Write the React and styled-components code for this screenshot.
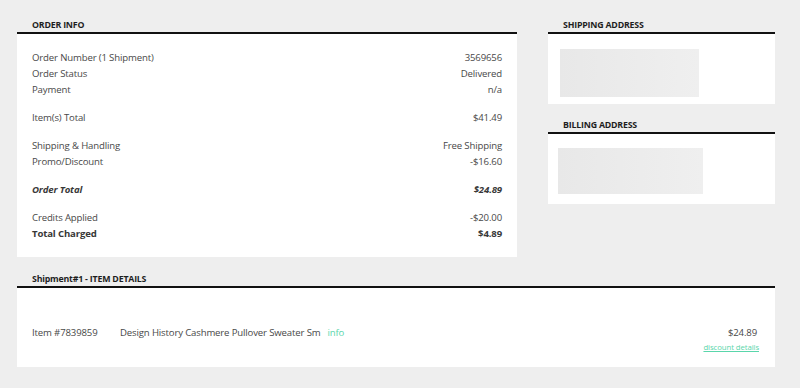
import React from "react";
import styled, { createGlobalStyle } from "styled-components";

const GlobalStyle = createGlobalStyle`
  html, body {
    margin: 0;
    padding: 0;
    background: #eeeeee;
    font-family: "Open Sans", "Liberation Sans", sans-serif;
    color: #484848;
  }
`;

const Page = styled.div`
  width: 800px;
  height: 388px;
  box-sizing: border-box;
  padding: 18px 25px 0 17px;
  display: flex;
  flex-direction: column;
  gap: 15px;
`;

const TopRow = styled.div`
  display: grid;
  grid-template-columns: 500px 227px;
  gap: 31px;
  align-items: start;
`;

const Column = styled.div`
  display: flex;
  flex-direction: column;
  gap: 14px;
`;

const Section = styled.section``;

const Heading = styled.h2`
  margin: 0;
  padding: 1px 0 1px 15px;
  font-size: 8.8px;
  letter-spacing: -0.2px;
  line-height: 12px;
  font-weight: 700;
  color: #1e1e1e;
  text-transform: ${(p) => (p.$plain ? "none" : "uppercase")};
`;

const Panel = styled.div`
  background: #fff;
  border-top: 2px solid #111;
  padding: ${(p) => p.$pad || "15px"};
  height: ${(p) => (p.$h ? `${p.$h}px` : "auto")};
  box-sizing: border-box;
`;

const Group = styled.div`
  & + & {
    margin-top: ${(p) => p.$gap || 13}px;
  }
`;

const Line = styled.div`
  display: flex;
  justify-content: space-between;
  font-size: 9.6px;
  letter-spacing: -0.15px;
  line-height: 16px;
  color: ${(p) => (p.$bold ? "#383838" : "#484848")};
  font-weight: ${(p) => (p.$bold ? 700 : 400)};
  font-style: ${(p) => (p.$italic ? "italic" : "normal")};
`;

const Placeholder = styled.div`
  width: ${(p) => p.$w}px;
  height: ${(p) => p.$h}px;
  margin-left: ${(p) => p.$x}px;
  background: linear-gradient(90deg, #e8e8e8, #efefef);
`;

const ItemRow = styled.div`
  display: flex;
  align-items: flex-start;
  font-size: 9.6px;
  letter-spacing: -0.15px;
  line-height: 16px;
`;

const ItemNo = styled.div`
  width: 88px;
`;

const ItemName = styled.div`
  flex: 1;
`;

const InfoLink = styled.a`
  color: #5ad6ab;
  margin-left: 7px;
  text-decoration: none;
`;

const PriceCol = styled.div`
  text-align: right;
  display: flex;
  flex-direction: column;
  align-items: flex-end;
`;

const Discount = styled.a`
  font-size: 7.8px;
  letter-spacing: -0.1px;
  line-height: 12px;
  color: #5ad6ab;
  text-decoration: underline;
  margin-right: -2px;
`;

const orderGroups = [
  {
    gap: 13,
    rows: [
      ["Order Number (1 Shipment)", "3569656"],
      ["Order Status", "Delivered"],
      ["Payment", "n/a"],
    ],
  },
  { gap: 13, rows: [["Item(s) Total", "$41.49"]] },
  {
    gap: 10,
    rows: [
      ["Shipping & Handling", "Free Shipping"],
      ["Promo/Discount", "-$16.60"],
    ],
  },
  { gap: 12, rows: [["Order Total", "$24.89", { bold: true, italic: true }]] },
  {
    gap: 13,
    rows: [
      ["Credits Applied", "-$20.00"],
      ["Total Charged", "$4.89", { bold: true }],
    ],
  },
];

const App = () => {
  return (
    <>
      <GlobalStyle />
      <Page>
        <TopRow>
          <Section>
            <Heading>Order Info</Heading>
            <Panel $pad="16px 15px 15px 15px">
              {orderGroups.map((g, i) => (
                <Group key={i} $gap={g.gap}>
                  {g.rows.map(([label, value, opts = {}]) => (
                    <Line key={label} $bold={opts.bold} $italic={opts.italic}>
                      <span>{label}</span>
                      <span>{value}</span>
                    </Line>
                  ))}
                </Group>
              ))}
            </Panel>
          </Section>
          <Column>
            <Section>
              <Heading>Shipping Address</Heading>
              <Panel $pad="15px 0 0 0" $h={72}>
                <Placeholder $x={12} $w={139} $h={48} />
              </Panel>
            </Section>
            <Section>
              <Heading>Billing Address</Heading>
              <Panel $pad="14px 0 0 0" $h={72}>
                <Placeholder $x={10} $w={145} $h={46} />
              </Panel>
            </Section>
          </Column>
        </TopRow>
        <Section>
          <Heading $plain>Shipment#1 - ITEM DETAILS</Heading>
          <Panel $pad="37px 18px 14px 15px" $h={81}>
            <ItemRow>
              <ItemNo>Item #7839859</ItemNo>
              <ItemName>
                Design History Cashmere Pullover Sweater Sm
                <InfoLink>info</InfoLink>
              </ItemName>
              <PriceCol>
                <span>$24.89</span>
                <Discount>discount details</Discount>
              </PriceCol>
            </ItemRow>
          </Panel>
        </Section>
      </Page>
    </>
  );
};

export default App;
